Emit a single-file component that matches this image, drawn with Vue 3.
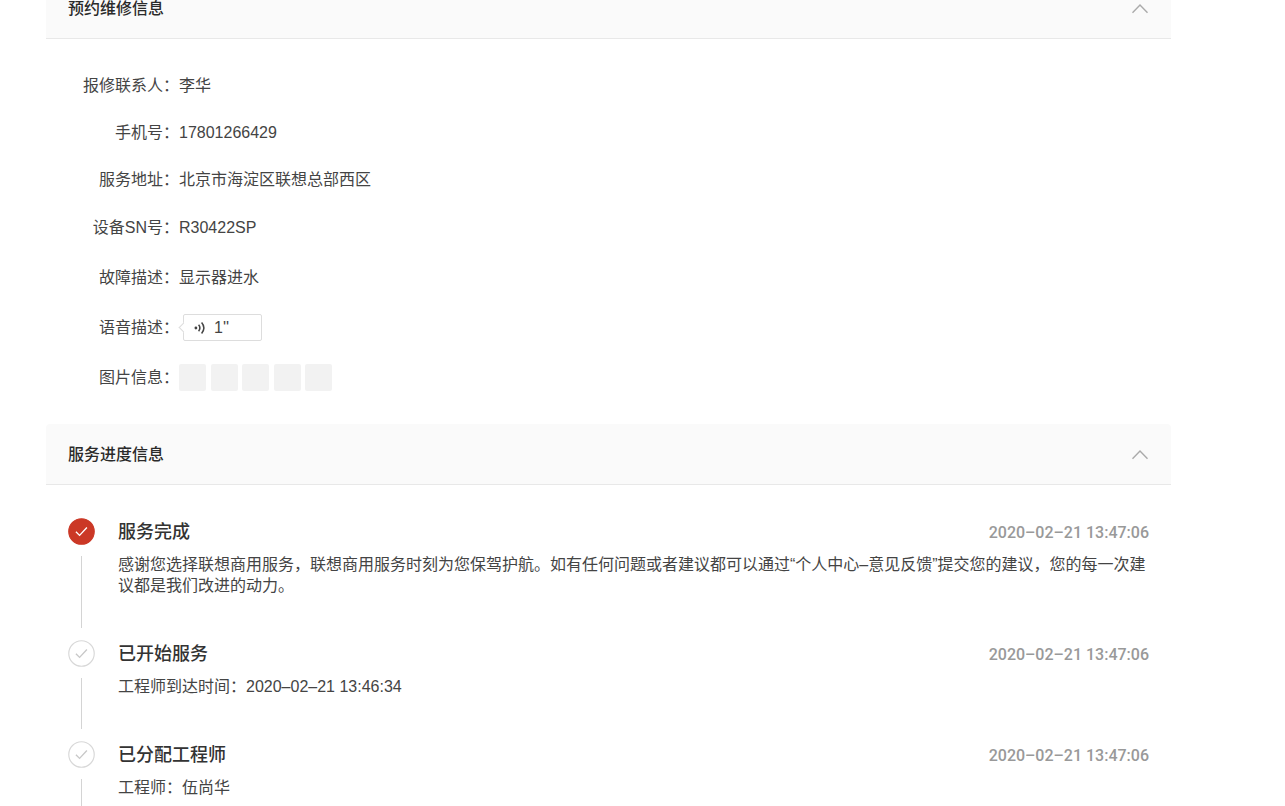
<script setup>
import { ref } from 'vue'

const showRepair = ref(true)
const showProgress = ref(true)

const details = [
    { label: '报修联系人：', value: '李华' },
    { label: '手机号：', value: '17801266429' },
    { label: '服务地址：', value: '北京市海淀区联想总部西区' },
    { label: '设备SN号：', value: 'R30422SP', tall: true },
    { label: '故障描述：', value: '显示器进水', tall: true },
    { label: '语音描述：', type: 'voice', value: "1''", tall: true },
    { label: '图片信息：', type: 'images', count: 5, tall: true }
]

const steps = [
    {
        title: '服务完成',
        time: '2020–02–21 13:47:06',
        text: '感谢您选择联想商用服务，联想商用服务时刻为您保驾护航。如有任何问题或者建议都可以通过“个人中心–意见反馈”提交您的建议，您的每一次建议都是我们改进的动力。',
        active: true
    },
    {
        title: '已开始服务',
        time: '2020–02–21 13:47:06',
        text: '工程师到达时间：2020–02–21 13:46:34'
    },
    {
        title: '已分配工程师',
        time: '2020–02–21 13:47:06',
        text: '工程师：伍尚华'
    }
]
</script>

<template>
    <main class="page" lang="zh-CN">
        <section class="panel">
            <header class="panel-header">
                <h2>预约维修信息</h2>
                <button type="button" class="toggle" aria-label="收起预约维修信息" :aria-expanded="showRepair"
                    @click="showRepair = !showRepair">
                    <svg :class="{ closed: !showRepair }" width="18" height="12" viewBox="0 0 18 12">
                        <path d="M1.5 10.8 L9 3 L16.5 10.8" />
                    </svg>
                </button>
            </header>

            <dl v-show="showRepair" class="details">
                <div v-for="item in details" :key="item.label" class="row" :class="{ tall: item.tall }">
                    <dt>{{ item.label }}</dt>
                    <dd v-if="item.type === 'voice'">
                        <button type="button" class="voice">
                            <svg class="wave" width="12" height="14" viewBox="0 0 12 14">
                                <circle cx="1.9" cy="7" r="1.4" />
                                <path d="M4.6 3.8 Q7.2 7 4.6 10.2" />
                                <path d="M7.6 1.6 Q12.2 7 7.6 12.4" />
                            </svg>
                            <span>{{ item.value }}</span>
                        </button>
                    </dd>
                    <dd v-else-if="item.type === 'images'" class="images">
                        <span v-for="n in item.count" :key="n" class="thumb"></span>
                    </dd>
                    <dd v-else>{{ item.value }}</dd>
                </div>
            </dl>
        </section>

        <section class="panel">
            <header class="panel-header">
                <h2>服务进度信息</h2>
                <button type="button" class="toggle" aria-label="收起服务进度信息" :aria-expanded="showProgress"
                    @click="showProgress = !showProgress">
                    <svg :class="{ closed: !showProgress }" width="18" height="12" viewBox="0 0 18 12">
                        <path d="M1.5 10.8 L9 3 L16.5 10.8" />
                    </svg>
                </button>
            </header>

            <ol v-show="showProgress" class="steps">
                <li v-for="step in steps" :key="step.title" class="step" :class="{ active: step.active }">
                    <div class="marker">
                        <svg class="check" width="27" height="27" viewBox="0 0 28 28">
                            <circle cx="14" cy="14" r="13.2" />
                            <path d="M8.2 14.2 L12 18 L19.6 9.8" />
                        </svg>
                        <span class="line"></span>
                    </div>
                    <div class="content">
                        <div class="step-head">
                            <h3>{{ step.title }}</h3>
                            <time>{{ step.time }}</time>
                        </div>
                        <p>{{ step.text }}</p>
                    </div>
                </li>
            </ol>
        </section>
    </main>
</template>

<style>
body {
    background: #fff;
    overflow: hidden;
}
</style>

<style scoped>
.page {
    margin-top: -22px;
    padding: 0 114px 0 46px;
    font-family: "Liberation Sans", "Noto Sans CJK SC", sans-serif;
    font-size: 16px;
    line-height: 21px;
    color: #444;
}

.panel-header {
    display: flex;
    align-items: center;
    justify-content: space-between;
    height: 60px;
    padding: 0 22px;
    background: #fafafa;
    border-bottom: 1px solid #e8e8e8;
    border-radius: 4px 4px 0 0;
}

.panel-header h2 {
    margin: 0;
    font-size: 16px;
    font-weight: 500;
    color: #2a2a2a;
}

.toggle {
    display: flex;
    padding: 0;
    border: none;
    background: none;
    cursor: pointer;
}

.toggle path {
    fill: none;
    stroke: #aaa;
    stroke-width: 1.4;
}

.closed {
    transform: rotate(180deg);
}

.details {
    display: flex;
    flex-direction: column;
    gap: 21px;
    margin: 0;
    padding: 33px 22px 32px;
}

.row {
    display: flex;
    align-items: center;
    height: 26px;
}

.row.tall {
    height: 29px;
}

.row dt {
    width: 111px;
    text-align: right;
    white-space: nowrap;
}

.row dd {
    margin: 0;
}

.voice {
    position: relative;
    display: flex;
    align-items: center;
    gap: 8px;
    width: 79px;
    height: 27px;
    margin-left: 4px;
    padding: 0 10px;
    border: 1px solid #ddd;
    border-radius: 2px;
    background: #fff;
    color: #444;
    font-family: inherit;
    font-size: 16px;
    cursor: pointer;
}

/* bubble arrow */
.voice::before {
    content: "";
    position: absolute;
    left: -4px;
    top: 9px;
    width: 6px;
    height: 6px;
    border-left: 1px solid #ddd;
    border-bottom: 1px solid #ddd;
    background: #fff;
    transform: rotate(45deg);
}

.wave circle {
    fill: #444;
}

.wave path {
    fill: none;
    stroke: #444;
    stroke-width: 1.5;
}

.images {
    display: flex;
    justify-content: space-between;
    width: 153px;
}

.thumb {
    width: 27px;
    height: 27px;
    border-radius: 2px;
    background: #f2f2f2;
}

.steps {
    list-style: none;
    margin: 0;
    padding: 33px 22px 0;
}

.step {
    display: flex;
    gap: 23px;
}

.marker {
    display: flex;
    flex-direction: column;
    align-items: center;
    gap: 11px;
    padding-bottom: 12px;
}

.check circle {
    fill: #fff;
    stroke: #d8d8d8;
    stroke-width: 1.2;
}

.check path {
    fill: none;
    stroke: #c8c8c8;
    stroke-width: 1.4;
}

.active .check circle {
    fill: #cb3826;
    stroke: #cb3826;
}

.active .check path {
    stroke: #fff;
}

.line {
    flex: 1;
    width: 1px;
    background: #d4d4d4;
}

.content {
    flex: 1;
    padding-bottom: 44px;
}

.step-head {
    display: flex;
    align-items: center;
    justify-content: space-between;
    height: 28px;
    margin-bottom: 8px;
}

.step-head h3 {
    margin: 0;
    font-size: 18px;
    font-weight: 500;
    color: #333;
}

.step-head time {
    font-family: Roboto, "Liberation Sans", sans-serif;
    font-weight: 500;
    color: #999;
}

.content p {
    margin: 0;
}
</style>
